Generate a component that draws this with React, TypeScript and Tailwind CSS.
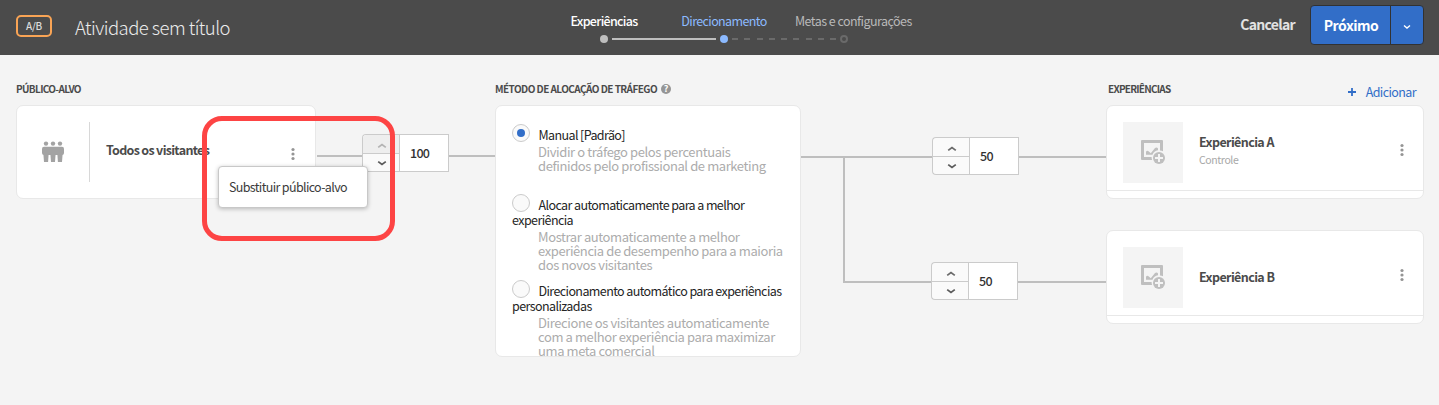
const Chevron = ({ up = false, color = "#5a5a5a" }: { up?: boolean; color?: string }) => (
  <svg width="10" height="6" viewBox="0 0 10 6" fill="none">
    <path d={up ? "M1.2 4.4 5 1.6 8.8 4.4" : "M1.2 1.6 5 4.4 8.8 1.6"} stroke={color} strokeWidth="1.8" />
  </svg>
);

const Stepper = ({ value, upDisabled = false }: { value: string; upDisabled?: boolean }) => (
  <div className="flex h-[38px] w-[87px] shrink-0">
    <div className="flex w-[37px] flex-col overflow-hidden rounded-l-[4px] border border-r-0 border-[#cbcbcb] bg-[#fafafa]">
      <div className={upDisabled ? "flex h-[19px] items-center justify-center border-b border-[#cbcbcb] bg-[#eeeeee] pl-px pt-1" : "flex h-[19px] items-center justify-center border-b border-[#cbcbcb] pl-px pt-1"}>
        <Chevron up color={upDisabled ? "#b3b3b3" : "#6a6a6a"} />
      </div>
      <div className="flex h-[17px] items-center justify-center pl-px">
        <Chevron color="#5a5a5a" />
      </div>
    </div>
    <div className="w-[50px] border border-[#cbcbcb] bg-white pl-2.5 text-[12.5px] font-medium leading-[36px] tracking-[-0.75px] text-[#323232]">{value}</div>
  </div>
);

const Dots = () => (
  <svg width="4" height="14" viewBox="0 0 4 14" fill="#959595">
    <circle cx="2" cy="2.5" r="1.6" />
    <circle cx="2" cy="7" r="1.6" />
    <circle cx="2" cy="11.5" r="1.6" />
  </svg>
);

const People = () => (
  <svg width="22" height="22" viewBox="0 0 22 22" fill="#a3a3a3">
    {[4, 11, 18].map((x) => (
      <circle key={x} cx={x} cy="2.6" r="2.2" />
    ))}
    <rect y="5.700" width="22" height="8.300" rx="2" />
    <path d="M1.300 12h5.400l-.6 9H2zM8.300 12h5.400l-.7 9H9zM15.300 12h5.400L20 21h-4.100z" />
  </svg>
);

const ImageAdd = () => (
  <svg width="25" height="25" viewBox="0 0 25 25">
    <path d="M1 0h20a1 1 0 0 1 1 1v10.300a7.500 7.500 0 0 0-3-.7V3H3v14h7.600a7.500 7.500 0 0 0 .5 3H1a1 1 0 0 1-1-1V1a1 1 0 0 1 1-1z" fill="#bfbfbf" />
    <path d="M5 14.800v-3c.6-1.300 1.900-1.300 2.800-.4l2 1.900 4.200-5.200c.9-.9 2.300-.8 3 .3v1.900c-2.600.5-4.700 2-5.500 4.500z" fill="#bfbfbf" />
    <circle cx="18" cy="18" r="6" fill="#bfbfbf" />
    <path d="M18 14v8M14 18h8" stroke="#f4f4f4" strokeWidth="2" />
  </svg>
);

const Experience = ({ name, note }: { name: string; note?: string }) => (
  <div className="flex h-[94px] w-[318px] flex-col rounded-[7px] border border-[#e8e8e8] bg-white">
    <div className="flex h-[85px] items-start border-b border-[#e8e8e8] pl-4 pt-4">
      <div className="flex h-[61px] w-[60px] items-start bg-[#f4f4f4] pl-[18px] pt-[18px]">
        <ImageAdd />
      </div>
      <div className="ml-4 w-[195px]">
        <div className={note ? "mt-[12px] text-[12.5px] font-bold leading-[16px] tracking-[-0.6px] text-[#4b4b4b]" : "mt-[21px] text-[12.5px] font-bold leading-[18px] tracking-[-0.6px] text-[#4b4b4b]"}>{name}</div>
        {note && <div className="mt-[2px] text-[10.5px] leading-[16px] tracking-[-0.4px] text-[#a8a8a8]">{note}</div>}
      </div>
      <div className="ml-1.5 mt-[21px]"><Dots /></div>
    </div>
  </div>
);

const methods = [
  {
    title: "Manual [Padrão]",
    rest: "",
    lines: ["Dividir o tráfego pelos percentuais", "definidos pelo profissional de marketing"],
  },
  {
    title: "Alocar automaticamente para a melhor",
    rest: "experiência",
    lines: ["Mostrar automaticamente a melhor", "experiência de desempenho para a maioria", "dos novos visitantes"],
  },
  {
    title: "Direcionamento automático para experiências",
    rest: "personalizadas",
    lines: ["Direcione os visitantes automaticamente", "com a melhor experiência para maximizar", "uma meta comercial"],
  },
];

const Header = () => (
  <header className="flex h-[55px] items-start whitespace-nowrap bg-[#4b4b4b]">
    <div className="ml-4 mt-[15px] h-[22px] w-9 rounded-[5px] border-2 border-[#f9a455] text-center text-[10px] font-medium leading-[18px] tracking-[-0.3px] text-[#dcdcdc]">A/B</div>
    <h1 className="ml-[23px] mt-[13px] w-[468px] text-[18.5px] font-light leading-[28px] tracking-[-0.55px] text-[#ececec]">Atividade sem título</h1>
    <div className="mt-3 w-[371px] text-[12.5px] leading-[18px]">
      <div className="flex">
        <div className="w-[122px] text-center font-medium tracking-[-0.7px] text-white">Experiências</div>
        <div className="w-[118px] text-center tracking-[-0.62px] text-[#8cbaff]">Direcionamento</div>
        <div className="pl-[12px] tracking-[-0.54px] text-[#b9b9b9]">Metas e configurações</div>
      </div>
      <div className="mt-[5px] flex items-center pl-[57px]">
        <span className="h-2 w-2 rounded-full bg-[#bebebe]" />
        <span className="mx-1 h-0.5 w-[104px] bg-[#bebebe]" />
        <span className="h-2 w-2 rounded-full bg-[#8cbaff]" />
        <span className="mx-1 flex w-[104px] justify-between">
          {Array.from({ length: 9 }, (_, i) => <span key={i} className="h-0.5 w-1.5 bg-[#6a6a6a]" />)}
        </span>
        <span className="h-2 w-2 rounded-full border-2 border-[#6a6a6a]" />
      </div>
    </div>
    <button className="ml-auto mt-[14px] text-[14px] font-bold leading-[20px] tracking-[-0.7px] text-[#e2e2e2]">Cancelar</button>
    <div className="ml-[15px] mr-[15px] mt-[5px] flex h-10 w-[114px] rounded-[4px] border border-[#323232] bg-[#326ec8]">
      <div className="w-[80px] border-r border-[#323232] pl-px text-center text-[14px] font-bold leading-[39px] tracking-[-0.5px] text-white">Próximo</div>
      <div className="flex flex-1 items-center justify-center pt-1">
        <svg width="8" height="6" viewBox="0 0 8 6" fill="none"><path d="M1 1.500 4 4 7 1.500" stroke="white" strokeWidth="1.400" /></svg>
      </div>
    </div>
  </header>
);

export default function App() {
  return (
    <div className="h-[405px] w-[1439px] overflow-hidden bg-[#f4f4f4] font-['Noto_Sans_CJK_SC','Noto_Sans',sans-serif]">
      <Header />
      <main className="flex items-start whitespace-nowrap pl-4">
        <section className="w-[300px]">
          <h2 className="h-[50px] pt-[26px] text-[10px] font-bold leading-[16px] tracking-[-0.65px] text-[#4b4b4b]">PÚBLICO-ALVO</h2>
          <div className="relative flex h-[94px] items-start rounded-[7px] border border-[#e8e8e8] bg-white">
            <div className="ml-[25px] mt-[35px]"><People /></div>
            <div className="ml-[25px] mt-4 h-[60px] w-px bg-[#d8d8d8]" />
            <div className="ml-4 mt-[34px] w-[185px] text-[12.5px] font-bold leading-[20px] tracking-[-0.68px] text-[#4b4b4b]">Todos os visitantes</div>
            <div className="mt-[41px]"><Dots /></div>
            <div className="absolute left-[201px] top-[60px] z-10 h-[42px] w-[150px] rounded-[4px] border border-[#c8c8c8] bg-white pl-[10px] text-[12.5px] leading-[40px] tracking-[-0.64px] text-[#3c3c3c] shadow-[0_1px_4px_rgba(0,0,0,0.25)]">Substituir público-alvo</div>
            <div className="pointer-events-none absolute left-[185px] top-[10px] z-20 h-[125px] w-[193px] rounded-[20px] border-[5px] border-[#fd4444]" />
          </div>
        </section>

        <div className="mt-[79px] flex h-[38px] w-[179px] items-center pl-px">
          <div className="mt-1.5 h-0.5 w-[45px] bg-[#bebebe]" />
          <Stepper value="100" upDisabled />
          <div className="mt-1.5 h-0.5 flex-1 bg-[#bebebe]" />
        </div>

        <section className="w-[306px]">
          <h2 className="flex h-[50px] items-start pt-[26px] text-[10px] font-bold leading-[16px] tracking-[-0.55px] text-[#4b4b4b]">
            MÉTODO DE ALOCAÇÃO DE TRÁFEGO
            <span className="ml-[4px] mt-[3px] h-[10px] w-[10px] rounded-full bg-[#959595] text-center text-[9px] leading-[10px] tracking-normal text-white">?</span>
          </h2>
          <div className="h-[252px] overflow-hidden rounded-[7px] border border-[#e8e8e8] bg-white pl-4 pt-[18px] text-[12.5px]">
            {methods.map((m, i) => (
              <div key={m.title} className={i === 0 ? "h-[70px]" : "h-[86px]"}>
                <div className="flex items-start">
                  <span className="flex h-[18px] w-[18px] shrink-0 items-center justify-center rounded-full border border-[#cbcbcb] bg-[#fafafa]">
                    {i === 0 && <span className="h-2 w-2 rounded-full bg-[#326ec8]" />}
                  </span>
                  <span className="ml-[8.5px] mt-[3px] leading-[16px] tracking-[-0.6px] text-[#252525]">{m.title}</span>
                </div>
                {m.rest && <div className="-mt-px leading-[16px] tracking-[-0.58px] text-[#252525]">{m.rest}</div>}
                <div className="ml-[26px] mt-[2px] text-[13px] leading-[14px] tracking-[-0.4px] text-[#acacac]">
                  {m.lines.map((l) => <div key={l}>{l}</div>)}
                </div>
              </div>
            ))}
          </div>
        </section>

        <div className="mt-[82px] w-[305px]">
          <div className="flex h-[38px] items-center">
            <div className="mt-0.5 h-0.5 w-[131px] bg-[#bebebe]" />
            <Stepper value="50" />
            <div className="mt-0.5 h-0.5 flex-1 bg-[#bebebe]" />
          </div>
          <div className="-mb-[20px] -mt-[17px] ml-[42px] h-[124px] w-0.5 bg-[#bebebe]" />
          <div className="flex h-[38px] items-center pl-[42px]">
            <div className="mt-0.5 h-0.5 w-[88px] bg-[#bebebe]" />
            <Stepper value="50" />
            <div className="mt-0.5 h-0.5 flex-1 bg-[#bebebe]" />
          </div>
        </div>

        <section className="w-[318px]">
          <div className="flex h-[50px] items-start pl-[2px] pt-[26px]">
            <h2 className="text-[10px] font-bold leading-[16px] tracking-[-0.76px] text-[#4b4b4b]">EXPERIÊNCIAS</h2>
            <div className="ml-auto mr-[8px] mt-[2px] flex text-[12.5px] leading-[18px] tracking-[-0.6px] text-[#326ec8]">
              <svg className="mr-[10px] mt-[5px]" width="8" height="8" viewBox="0 0 8 8"><path d="M4 0v8M0 4h8" stroke="#326ec8" strokeWidth="1.800" /></svg>
              Adicionar
            </div>
          </div>
          <div className="flex flex-col gap-[31px]">
            <Experience name="Experiência A" note="Controle" />
            <Experience name="Experiência B" />
          </div>
        </section>
      </main>
    </div>
  );
}
